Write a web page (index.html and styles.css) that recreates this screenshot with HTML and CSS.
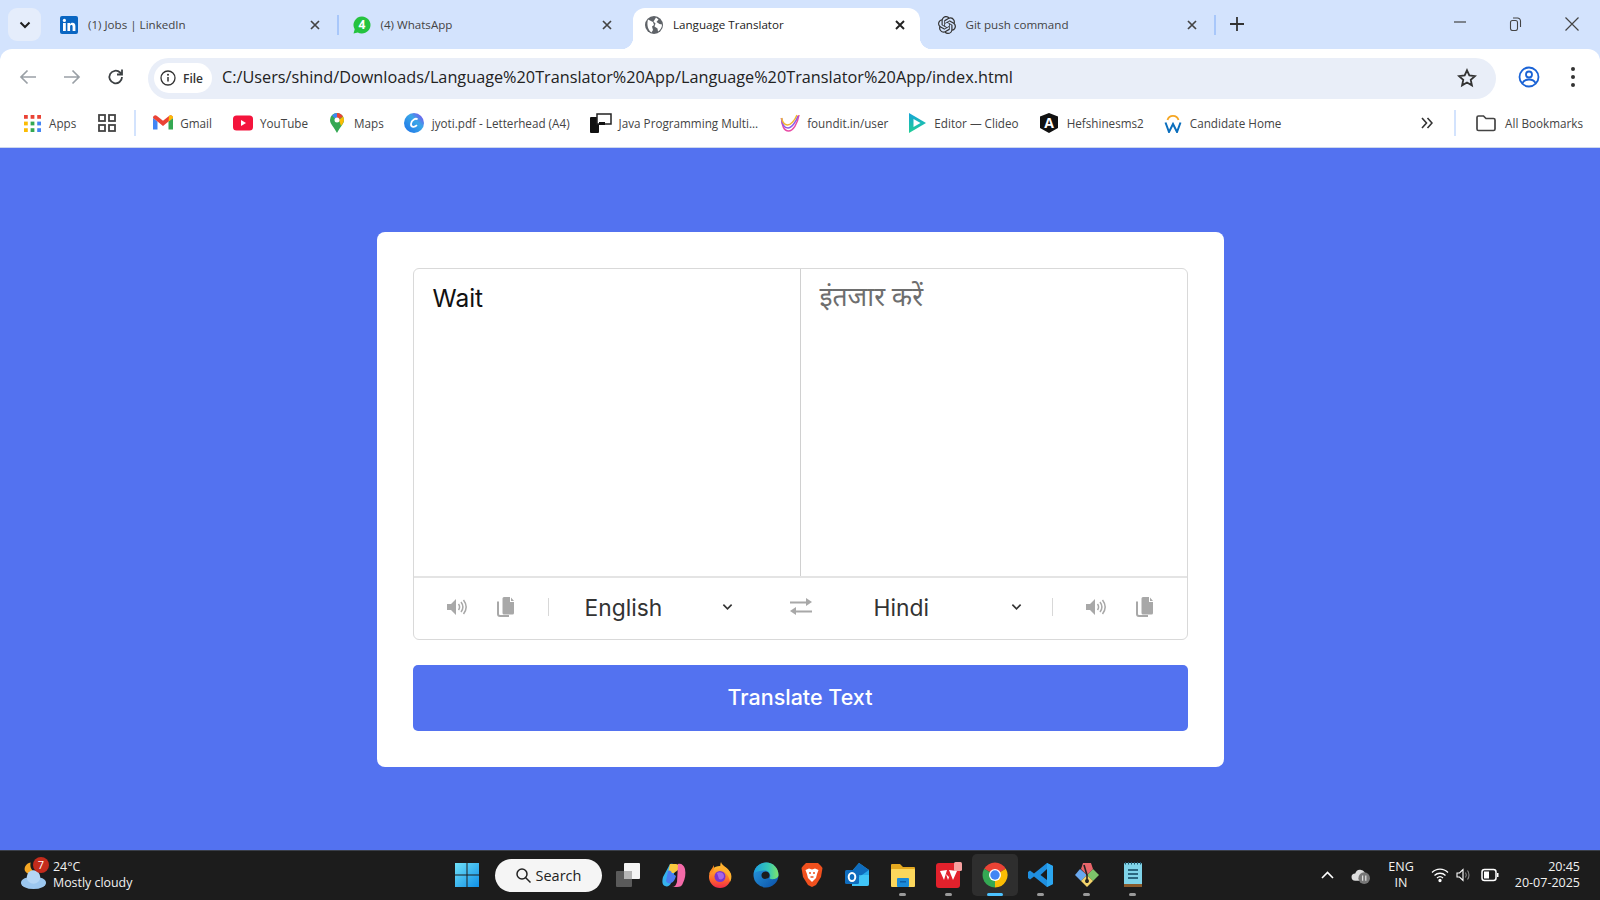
FILE: index.html
```html
<!DOCTYPE html>
<html lang="en">
<head>
<meta charset="utf-8">
<title>Language Translator</title>
<link rel="stylesheet" href="styles.css">
</head>
<body>
<div class="shell">
  <header class="tabstrip">
    <button class="tab-menu"><svg width="12" height="8" viewBox="0 0 12 8"><path d="M1.500 1.500 6 6l4.500-4.500" fill="none" stroke="#1f1f1f" stroke-width="2"/></svg></button>
    <div class="tab">
      <svg class="fav" viewBox="0 0 18 18"><rect width="18" height="18" rx="2" fill="#0a66c2"/><rect x="3" y="7" width="2.800" height="8" fill="#fff"/><circle cx="4.400" cy="4.400" r="1.600" fill="#fff"/><path d="M7.400 7h2.600v1.200c.6-.9 1.500-1.400 2.600-1.400 2 0 2.800 1.300 2.800 3.400V15h-2.800v-4.200c0-1-.3-1.700-1.200-1.700s-1.300.7-1.300 1.700V15H7.400z" fill="#fff"/></svg>
      <span class="tab-title">(1) Jobs | LinkedIn</span>
      <svg class="tab-x" viewBox="0 0 10 10"><path d="m1 1 8 8M9 1 1 9" stroke="#444" stroke-width="1.700"/></svg>
    </div>
    <i class="tab-sep"></i>
    <div class="tab">
      <svg class="fav" viewBox="0 0 18 18"><path d="M9 .5a8.500 8.500 0 0 0-7.300 12.800L.5 17.500l4.300-1.100A8.500 8.500 0 1 0 9 .5z" fill="#25c33f"/><text x="9" y="13" class="fav-num">4</text></svg>
      <span class="tab-title">(4) WhatsApp</span>
      <svg class="tab-x" viewBox="0 0 10 10"><path d="m1 1 8 8M9 1 1 9" stroke="#444" stroke-width="1.700"/></svg>
    </div>
    <i class="tab-sep clear"></i>
    <div class="tab active">
      <svg class="fav" viewBox="0 0 18 18"><circle cx="9" cy="9" r="9" fill="#5f6368"/><path d="M3 3.500 8 6l1 3-2 1.500 1 3.500-1.500 2.500C3 14 1.500 9 3 3.500zM11 1.500l2.500 2-2 2.500 3 2 2.500.5c0 3-1.500 5.500-4 7l-.5-3-3-2 1-3-2-2z" fill="#fff"/></svg>
      <span class="tab-title">Language Translator</span>
      <svg class="tab-x" viewBox="0 0 10 10"><path d="m1 1 8 8M9 1 1 9" stroke="#222" stroke-width="1.900"/></svg>
    </div>
    <i class="tab-sep clear"></i>
    <div class="tab">
      <svg class="fav" viewBox="0 0 24 24"><path fill="#333" d="M22.282 9.821a5.985 5.985 0 0 0-.516-4.91 6.046 6.046 0 0 0-6.51-2.9A6.065 6.065 0 0 0 4.981 4.18a5.985 5.985 0 0 0-3.998 2.9 6.046 6.046 0 0 0 .743 7.097 5.98 5.98 0 0 0 .51 4.911 6.051 6.051 0 0 0 6.515 2.9A5.985 5.985 0 0 0 13.26 24a6.056 6.056 0 0 0 5.772-4.206 5.99 5.99 0 0 0 3.997-2.9 6.056 6.056 0 0 0-.747-7.073zM13.26 22.43a4.476 4.476 0 0 1-2.876-1.04l.141-.081 4.779-2.758a.795.795 0 0 0 .392-.681v-6.737l2.02 1.168a.071.071 0 0 1 .038.052v5.583a4.504 4.504 0 0 1-4.494 4.494zM3.6 18.304a4.47 4.47 0 0 1-.535-3.014l.142.085 4.783 2.759a.771.771 0 0 0 .78 0l5.843-3.369v2.332a.08.08 0 0 1-.033.062L9.74 19.95a4.5 4.5 0 0 1-6.14-1.646zM2.34 7.896a4.485 4.485 0 0 1 2.366-1.973V11.6a.766.766 0 0 0 .388.676l5.815 3.355-2.02 1.168a.076.076 0 0 1-.071 0l-4.83-2.786A4.504 4.504 0 0 1 2.34 7.872zm16.597 3.855l-5.833-3.387L15.119 7.2a.076.076 0 0 1 .071 0l4.83 2.791a4.494 4.494 0 0 1-.676 8.105v-5.678a.79.79 0 0 0-.407-.667zm2.01-3.023l-.141-.085-4.774-2.782a.776.776 0 0 0-.785 0L9.409 9.23V6.897a.066.066 0 0 1 .028-.061l4.83-2.787a4.5 4.5 0 0 1 6.68 4.66zm-12.64 4.135l-2.02-1.164a.08.08 0 0 1-.038-.057V6.075a4.5 4.5 0 0 1 7.375-3.453l-.142.08L8.704 5.46a.795.795 0 0 0-.393.681zm1.097-2.365l2.602-1.5 2.607 1.5v2.999l-2.597 1.5-2.607-1.5Z"/></svg>
      <span class="tab-title">Git push command</span>
      <svg class="tab-x" viewBox="0 0 10 10"><path d="m1 1 8 8M9 1 1 9" stroke="#444" stroke-width="1.700"/></svg>
    </div>
    <i class="tab-sep"></i>
    <span class="tab-plus"><svg width="14" height="14" viewBox="0 0 14 14"><path d="M7 0v14M0 7h14" stroke="#333" stroke-width="1.800"/></svg></span>
    <div class="win-controls">
      <svg width="14" height="14" viewBox="0 0 14 14"><path d="M1 5h12" stroke="#444" stroke-width="1.200"/></svg>
      <svg width="14" height="14" viewBox="0 0 14 14" fill="none" stroke="#444" stroke-width="1.100"><rect x="2.500" y="3.500" width="7" height="10" rx="2"/><path d="M5 1h4.500a3 3 0 0 1 3 3v6"/></svg>
      <svg class="win-close" width="14" height="14" viewBox="0 0 14 14"><path d="M.5.500l13 13M13.500.500l-13 13" stroke="#444" stroke-width="1.200"/></svg>
    </div>
  </header>

  <nav class="toolbar">
    <svg class="nav-ico" viewBox="0 0 18 18"><path d="M17 9H2M8.500 2.500 2 9l6.500 6.500" fill="none" stroke="#9aa0a6" stroke-width="1.700"/></svg>
    <svg class="nav-ico" viewBox="0 0 18 18"><path d="M1 9h15M9.500 2.500 16 9l-6.500 6.500" fill="none" stroke="#9aa0a6" stroke-width="1.700"/></svg>
    <svg class="nav-ico" viewBox="0 0 18 18"><path d="M15 9a6.300 6.300 0 1 1-1.900-4.500L15 6.500M15 1.500v5h-5" fill="none" stroke="#3c4043" stroke-width="1.800"/></svg>
    <div class="omnibox">
      <span class="site-chip"><svg width="16" height="16" viewBox="0 0 16 16"><circle cx="8" cy="8" r="7" fill="none" stroke="#333" stroke-width="1.300"/><path d="M8 7v4.500" stroke="#333" stroke-width="1.500"/><circle cx="8" cy="4.800" r="1" fill="#333"/></svg>File</span>
      <span class="url">C:/Users/shind/Downloads/Language%20Translator%20App/Language%20Translator%20App/index.html</span>
      <svg class="star" width="20" height="20" viewBox="0 0 24 24"><path d="m12 2.800 2.800 6.200 6.700.7-5 4.500 1.400 6.600-5.900-3.400-5.900 3.400 1.400-6.600-5-4.500 6.700-.7z" fill="none" stroke="#333" stroke-width="2.200"/></svg>
    </div>
    <svg class="avatar" width="22" height="22" viewBox="0 0 22 22" fill="none" stroke="#1a63d6" stroke-width="1.800"><circle cx="11" cy="11" r="9.500"/><circle cx="11" cy="8.500" r="3"/><path d="M4.500 17c1.500-3 4-3.500 6.500-3.500s5 .5 6.500 3.500"/></svg>
    <span class="kebab"><i></i><i></i><i></i></span>
  </nav>

  <nav class="bookmarks">
    <div class="bm bm-apps">
      <svg class="bm-ico" viewBox="0 0 18 18"><rect width="4" height="4" fill="#ea4335"/><rect x="7" width="4" height="4" fill="#ea4335"/><rect x="14" width="4" height="4" fill="#ea4335"/><rect y="7" width="4" height="4" fill="#fbbc04"/><rect x="7" y="7" width="4" height="4" fill="#34a853"/><rect x="14" y="7" width="4" height="4" fill="#4285f4"/><rect y="14" width="4" height="4" fill="#fbbc04"/><rect x="7" y="14" width="4" height="4" fill="#34a853"/><rect x="14" y="14" width="4" height="4" fill="#4285f4"/></svg>
      Apps</div>
    <svg class="grid-ico" viewBox="0 0 18 18" fill="none" stroke="#444" stroke-width="1.800"><rect x="1" y="1" width="6" height="6"/><rect x="11" y="1" width="6" height="6"/><rect x="1" y="11" width="6" height="6"/><rect x="11" y="11" width="6" height="6"/></svg>
    <i class="bm-sep"></i>
    <div class="bm bm-gmail"><svg class="bm-ico" viewBox="0 0 20 16"><path d="M0 3v11.500h4.500V6.500z" fill="#4285f4"/><path d="M20 3v11.500h-4.500V6.500z" fill="#34a853"/><path d="M0 3c0-2.500 2.500-3.500 4-2l6 4.800L16 1c1.500-1.500 4-.5 4 2l-4.500 3.500L10 11 4.500 6.500z" fill="#ea4335"/><path d="M16 1c1.500-1.500 4-.5 4 2l-4.500 3.500z" fill="#fbbc04"/></svg>Gmail</div>
    <div class="bm bm-yt"><svg class="bm-ico" viewBox="0 0 20 16"><rect width="20" height="15" y=".5" rx="3.500" fill="#f4143c"/><path d="m8 5 5 3-5 3z" fill="#fff"/></svg>YouTube</div>
    <div class="bm bm-maps"><svg class="bm-ico" viewBox="0 0 14 20"><path d="M7 0a7 7 0 0 1 7 7c0 4-4 7-7 13C4 14 0 11 0 7a7 7 0 0 1 7-7z" fill="#34a853"/><path d="M2 2.500A7 7 0 0 1 7 0v4.500a2.500 2.500 0 0 0-2 1z" fill="#4285f4"/><path d="M7 0a7 7 0 0 1 6 3.500L9 6a2.500 2.500 0 0 0-2-1.500z" fill="#ea4335"/><path d="M13 3.500A7 7 0 0 1 14 7c0 2-1.500 4-3 6L9 7z" fill="#fbbc04"/><circle cx="7" cy="7" r="2.500" fill="#fff"/></svg>Maps</div>
    <div class="bm bm-jyoti"><svg class="bm-ico" viewBox="0 0 20 20"><defs><linearGradient id="canva" x1="0" y1="1" x2="1" y2="0"><stop offset="0" stop-color="#1c6fe8"/><stop offset=".6" stop-color="#3aa7e8"/><stop offset="1" stop-color="#8a3ff0"/></linearGradient></defs><circle cx="10" cy="10" r="10" fill="url(#canva)"/><path d="M13.500 6.500C12 4.800 7.500 6.500 7 11c-.3 3.500 3.500 3.500 6 1.200" fill="none" stroke="#fff" stroke-width="1.800"/></svg>jyoti.pdf - Letterhead (A4)</div>
    <div class="bm bm-java"><svg class="bm-ico bm-wide" viewBox="0 0 22 20"><rect y="4" width="9" height="16" rx="1" fill="#111"/><rect x="7" y="1" width="14" height="10" fill="#fff" stroke="#222" stroke-width="1.500"/><rect x="9" y="9" width="6" height="3" fill="#111"/></svg>Java Programming Multi...</div>
    <div class="bm bm-found"><svg class="bm-ico" viewBox="0 0 20 20" fill="none" stroke-width="1.500"><path d="M1.500 5c0 7 2.500 13 7 13s9-7 10.500-16" stroke="#e84ba5"/><path d="M1.500 5c.5 6 3 10 6.500 10s8-6 10-12" stroke="#8e5ce6"/><path d="M1.500 5c1 4 3 7 6 7s7-4 9.500-10" stroke="#f2b632"/></svg>foundit.in/user</div>
    <div class="bm bm-clideo"><svg class="bm-ico" viewBox="0 0 18 20"><defs><linearGradient id="clid" x1="0" y1="0" x2="0" y2="1"><stop offset="0" stop-color="#16a4d8"/><stop offset="1" stop-color="#20cf94"/></linearGradient></defs><path d="M1 0 18 10 1 20z" fill="url(#clid)"/><path d="M5.500 6 12.500 10l-7 4z" fill="#fff"/></svg>Editor — Clideo</div>
    <div class="bm bm-hef"><svg class="bm-ico" viewBox="0 0 20 20"><path d="M10 0 19 3.500V15l-9 5-9-5V3.500z" fill="#111"/><text x="10" y="15" class="fav-a">A</text></svg>Hefshinesms2</div>
    <div class="bm bm-cand"><svg class="bm-ico" viewBox="0 0 18 20" fill="none"><path d="M3.500 7a5.700 5.700 0 0 1 11 0" stroke="#f5a623" stroke-width="1.800"/><path d="M1.500 9.500 5 19l4-8 4 8 3.500-9.500" stroke="#0a6ebd" stroke-width="2"/></svg>Candidate Home</div>
    <span class="bm-more"><svg width="12" height="12" viewBox="0 0 12 12" fill="none" stroke="#333" stroke-width="1.600"><path d="m1 1 4.500 5L1 11M6.500 1 11 6l-4.500 5"/></svg></span>
    <i class="bm-sep bm-sep2"></i>
    <div class="bm bm-all"><svg class="bm-ico" viewBox="0 0 20 17"><path d="M1 3a1.500 1.500 0 0 1 1.500-1.500h5L10 4h7.500A1.500 1.500 0 0 1 19 5.500v9a1.500 1.500 0 0 1-1.500 1.500h-15A1.500 1.500 0 0 1 1 14.500z" fill="none" stroke="#444" stroke-width="1.700"/></svg>All Bookmarks</div>
  </nav>

  <main class="page">
    <section class="card">
      <div class="panel">
        <div class="texts">
          <div class="pane from">Wait</div>
          <div class="pane to">इंतजार करें</div>
        </div>
        <div class="controls">
          <svg class="snd s1" viewBox="0 0 20 16"><use href="#sound"/></svg>
          <svg class="cpy" viewBox="0 0 17 20"><use href="#copy"/></svg>
          <i class="ctl-sep c1"></i>
          <div class="lang l1"><span>English</span><svg class="chev" viewBox="0 0 12 8"><path d="M1.500 1.500 6 6l4.500-4.500" fill="none" stroke="#333" stroke-width="1.800"/></svg></div>
          <svg class="swap" viewBox="0 0 22 18"><path d="M0 3.500h16V0l6 4-6 4V5.500H0zM22 12.500H6V9l-6 4 6 4v-2.500h16z" fill="#a8a8a8"/></svg>
          <div class="lang l2"><span>Hindi</span><svg class="chev" viewBox="0 0 12 8"><path d="M1.500 1.500 6 6l4.500-4.500" fill="none" stroke="#333" stroke-width="1.800"/></svg></div>
          <i class="ctl-sep c2"></i>
          <svg class="snd s2" viewBox="0 0 20 16"><use href="#sound"/></svg>
          <svg class="cpy" viewBox="0 0 17 20"><use href="#copy"/></svg>
        </div>
      </div>
      <button class="translate">Translate Text</button>
    </section>
  </main>

  <footer class="taskbar">
    <div class="weather">
      <svg class="w-ico" viewBox="0 0 28 30"><path d="M11 2c-1 5 1 9 6 10-3 3-8 3-11 0C3 8 6 3 11 2z" fill="#f5a623"/><ellipse cx="14" cy="23" rx="13" ry="6.500" fill="#9cc7ef"/><circle cx="14" cy="17" r="7" fill="#b4d6f5"/></svg>
      <span class="w-badge">7</span>
      <div class="w-text"><span>24°C</span><span>Mostly cloudy</span></div>
    </div>
    <svg class="winlogo" viewBox="0 0 24 24"><defs><linearGradient id="wg" x1="0" y1="0" x2="1" y2="1"><stop offset="0" stop-color="#6fe0f8"/><stop offset="1" stop-color="#0f8fe6"/></linearGradient></defs><path d="M0 0h11.500v11.500H0zM12.500 0H24v11.500H12.500zM0 12.500h11.500V24H0zM12.500 12.500H24V24H12.500z" fill="url(#wg)"/></svg>
    <div class="search"><svg width="15" height="15" viewBox="0 0 15 15" fill="none" stroke="#222" stroke-width="1.500"><circle cx="6" cy="6" r="5"/><path d="m9.500 9.500 5 5"/></svg>Search</div>
    <div class="tb-app"><svg class="tb-ico" viewBox="0 0 26 26"><rect x="1" y="9" width="16" height="16" rx="1" fill="#5a5a5a"/><rect x="9" y="1" width="16" height="16" rx="1" fill="#f4f4f4"/><rect x="9" y="9" width="8" height="8" fill="#b5b5b5"/></svg></div>
    <div class="tb-app"><svg class="tb-ico" viewBox="0 0 26 26"><path d="M9 2c3-1 5 0 6 3l-5 16c-1 3-4 4-6 3-3-1-3-5-2-9z" fill="#35b2ee"/><path d="M9 2h6c3 0 3 3 2 6l-4 3H7z" fill="#f8c93e"/><path d="M17 2c3-1 6 1 7 5 1 5 0 10-2 14-1 3-3 4-6 4h-5c3 0 4-2 5-5z" fill="#f46aa8"/><path d="M7 9c2-1 3 0 4 2l4 3c-1 3-2 6-5 7-2 1-4 0-5-2z" fill="#4a7cf0"/></svg></div>
    <div class="tb-app"><svg class="tb-ico" viewBox="0 0 26 26"><defs><linearGradient id="ffx" x1="0" y1="0" x2="0" y2="1"><stop offset="0" stop-color="#ffc02e"/><stop offset=".6" stop-color="#ff6a2b"/><stop offset="1" stop-color="#f0284a"/></linearGradient></defs><circle cx="13" cy="15" r="11" fill="url(#ffx)"/><path d="M14 0c1 4 8 6 10 12 1 3 0 6-1 8-1-7-5-10-9-13-1-2-1-5 0-7z" fill="#ffb02e"/><path d="M7 3c-1 3-4 5-5 9l4-2c1-2 1-5 1-7z" fill="#ff8a1f"/><circle cx="13" cy="14.500" r="5.500" fill="#7a35d0"/><path d="M10 11c3-2 7 0 7 3s-3 4-5 3" fill="#a565e8"/></svg></div>
    <div class="tb-app"><svg class="tb-ico" viewBox="0 0 26 26"><defs><linearGradient id="edg" x1="0" y1="0" x2="1" y2="1"><stop offset="0" stop-color="#2a9ee0"/><stop offset="1" stop-color="#0a4fa8"/></linearGradient><linearGradient id="edg2" x1="0" y1="0" x2="1" y2="0"><stop offset="0" stop-color="#1b9de2"/><stop offset=".6" stop-color="#36c9b3"/><stop offset="1" stop-color="#7fe36a"/></linearGradient></defs><circle cx="13" cy="13" r="12.500" fill="url(#edg)"/><path d="M1 11C2 5 7 .5 13.500.5 20 .5 25.500 6 25.500 13c0 4-6 5-9 3.500 2-3 0-8-5-8-4 0-8 1-10.500 2.500z" fill="url(#edg2)"/><path d="M10.500 10c3-1.500 6 .5 6 3 0 1.500-.5 2-1 3l-3.500 1c-2.500 0-3.500-2-3.500-3.500s.5-2.500 2-3.500z" fill="#1c1c1c"/></svg></div>
    <div class="tb-app"><svg class="tb-ico brave" viewBox="0 0 22 26"><path d="M5 1h12l3 3 1.500 2-1.500 9-5 8-4 2-4-2-5-8L.5 6 2 4z" fill="#f0501e"/><path d="M4.500 8 8 6.500l3 1 3-1L17.500 8 16 12l-1 4-4 4-4-4-1-4z" fill="#fff"/><path d="M8 11h2M12 11h2M9.500 15h3" stroke="#f0501e" stroke-width="1.300"/></svg></div>
    <div class="tb-app"><svg class="tb-ico" viewBox="0 0 26 26"><path d="M15 1 25 8v14a2 2 0 0 1-2 2H8V9z" fill="#28a8ea"/><path d="M8 9 15 1l10 7-10 7z" fill="#0f6cbd"/><path d="M8 13 25 13v9a2 2 0 0 1-2 2H8z" fill="#50d9ff" opacity=".6"/><rect x="1" y="8" width="14" height="14" rx="1.500" fill="#0f6cbd"/><ellipse cx="8" cy="15" rx="3.300" ry="4" fill="none" stroke="#fff" stroke-width="2"/></svg></div>
    <div class="tb-app dot"><svg class="tb-ico" viewBox="0 0 26 26"><path d="M1 3a1 1 0 0 1 1-1h8l3 3h11a1 1 0 0 1 1 1v18H1z" fill="#e5a920"/><rect x="1" y="7" width="24" height="18" rx="1" fill="#fcd75c"/><rect x="7" y="16" width="12" height="9" rx="1" fill="#1a8ad8"/><rect x="10" y="19" width="6" height="1.500" fill="#0d5fa8"/></svg></div>
    <div class="tb-app dot"><svg class="tb-ico" viewBox="0 0 26 26"><rect y="1" width="24" height="25" rx="3" fill="#e2212c"/><rect x="18" width="8" height="9" rx="1.500" fill="#f7a0a0"/><path d="m4 9 7-1-3 10zM10 12l3 3 2-5-3 8zM13 8l8 1-4 9z" fill="#fff"/></svg></div>
    <div class="tb-app current"><svg class="tb-ico" viewBox="0 0 26 26"><path d="M13 13 2.180 6.750A12.500 12.500 0 0 1 23.830 6.750z" fill="#ea4335"/><path d="M13 13 23.830 6.750A12.500 12.500 0 0 1 13 25.500z" fill="#fbbc04"/><path d="M13 13 13 25.500A12.500 12.500 0 0 1 2.180 6.750z" fill="#34a853"/><circle cx="13" cy="13" r="6" fill="#fff"/><circle cx="13" cy="13" r="4.700" fill="#4285f4"/></svg></div>
    <div class="tb-app dot"><svg class="tb-ico" viewBox="0 0 26 26"><path d="M19 1 25 4v18l-6 3L6 14.500l-4 3-2-1.500V10l2-1.500 4 3z" fill="#1f8fe0"/><path d="M19 1 25 4v18l-6 3z" fill="#2ba6f0"/><path d="m19 7-6.500 6 6.500 5z" fill="#1c1c1c"/></svg></div>
    <div class="tb-app dot"><svg class="tb-ico" viewBox="0 0 26 26"><path d="M6 7 13 13l-6 6-6-6z" fill="#6aa8ee"/><path d="M13 13 19 7l6 6-6 6z" fill="#7cc46a"/><path d="M7 19l6-6 6 6-6 6z" fill="#f3d46b"/><path d="M9 1l8 0 2 6-6 6-6-6z" fill="#e8656a"/><path d="m10 3 3 10v8" stroke="#222" stroke-width="1.600" fill="none"/><circle cx="13" cy="19" r="2" fill="#222"/></svg></div>
    <div class="tb-app dot"><svg class="tb-ico" viewBox="0 0 20 26"><rect x="1" y="1" width="18" height="24" rx="1" fill="#7fd3e8"/><rect x="1" y="22" width="18" height="3" fill="#8a5a2b"/><path d="M2.500 0v2.500M5.500 0v2.500M8.500 0v2.500M11.500 0v2.500M14.500 0v2.500M17.500 0v2.500" stroke="#20546a" stroke-width="1"/><path d="M5 8h10M5 12h10M5 16h10" stroke="#10445c" stroke-width="1.500"/></svg></div>
    <div class="tray">
      <svg width="13" height="8" viewBox="0 0 13 8"><path d="m1 7 5.500-5.500L12 7" fill="none" stroke="#fff" stroke-width="1.600"/></svg>
      <svg class="tray-cloud" width="19" height="17" viewBox="0 0 18 16"><path d="M4 13a3.500 3.500 0 0 1 0-7 5 5 0 0 1 9-1v8z" fill="#ddd"/><circle cx="12.500" cy="10.500" r="5.500" fill="#777"/><path d="M11 8v5M14 8v5" stroke="#ddd" stroke-width="1.200"/></svg>
      <div class="lang-ind"><span>ENG</span><span>IN</span></div>
      <svg class="tray-wifi" width="18" height="16" viewBox="0 0 18 16" fill="none" stroke="#fff" stroke-width="1.300"><path d="M1 5.500c4.500-4.500 11.500-4.500 16 0M3.500 8.500c3-3 8-3 11 0M6 11c1.700-1.500 4.300-1.500 6 0"/><circle cx="9" cy="13.500" r="1" fill="#fff"/></svg>
      <svg class="tray-vol" width="16" height="16" viewBox="0 0 16 16" fill="none" stroke="#fff" stroke-width="1.100"><path d="M1 6h2.500L7 2.500v11L3.500 10H1z"/><path d="M9.500 5.500c1 1.500 1 3.500 0 5M11.500 3.500c2 2.500 2 6.500 0 9" stroke="#888"/></svg>
      <svg class="tray-bat" width="18" height="14" viewBox="0 0 18 14"><rect x="1" y="1.500" width="14" height="11" rx="2.500" fill="none" stroke="#fff" stroke-width="1.500"/><rect x="3" y="3.500" width="5" height="7" fill="#fff"/><rect x="16" y="5" width="1.500" height="4" fill="#fff"/></svg>
      <div class="clock"><span>20:45</span><span>20-07-2025</span></div>
    </div>
  </footer>
</div>
<svg class="defs" width="0" height="0">
  <defs>
    <g id="sound"><path d="M0 5h4l5-5v16l-5-5H0z" fill="#a8a8a8"/><path d="M11.500 5c1.300 1.800 1.300 4.200 0 6M14 3c2.300 3 2.300 7 0 10M16.500 1c3.300 4.300 3.300 9.700 0 14" fill="none" stroke="#a8a8a8" stroke-width="1.500"/></g>
    <g id="copy"><path d="M7 0h6v5h4v11a1.500 1.500 0 0 1-1.500 1.500H7A1.500 1.500 0 0 1 5.500 16V1.500A1.500 1.500 0 0 1 7 0zM14 .5 17 4h-3z" fill="#a8a8a8"/><path d="M1 4.500V17a2 2 0 0 0 2 2h9" fill="none" stroke="#a8a8a8" stroke-width="2"/></g>
  </defs>
</svg>
</body>
</html>
```

FILE: styles.css
```css
* { box-sizing: border-box; }
html, body { margin: 0; height: 100%; }
body { font-family: "Open Sans", "Liberation Sans", sans-serif; overflow: hidden; }
i { display: block; }
.defs { position: absolute; }
.shell { height: 900px; display: flex; flex-direction: column; background: #d3e3fd; }

/* tab strip */
.tabstrip { height: 49px; display: flex; align-items: flex-end; padding-left: 8px; flex: none; }
.tab-menu { width: 33px; height: 33px; margin: 0 7px 8px 0; border: 0; border-radius: 9px; background: #e5edfb; display: flex; align-items: center; justify-content: center; padding: 0; flex: none; }
.tab { width: 286.500px; height: 41px; display: flex; align-items: center; padding: 0 15px 8px 12px; border-radius: 12px 12px 0 0; color: #444; font-size: 11.600px; position: relative; flex: none; }
.tab.active { background: #fff; color: #222; }
.tab.active::before, .tab.active::after { content: ""; position: absolute; bottom: 0; width: 12px; height: 12px; }
.tab.active::before { left: -12px; background: radial-gradient(circle at 0 0, transparent 12px, #fff 12.500px); }
.tab.active::after { right: -12px; background: radial-gradient(circle at 100% 0, transparent 12px, #fff 12.500px); }
.fav { width: 18px; height: 18px; margin-right: 10px; flex: none; }
.fav-num { font: 700 12px "Open Sans", sans-serif; fill: #fff; text-anchor: middle; }
.fav-a { font: 700 14px "Open Sans", sans-serif; fill: #fff; text-anchor: middle; }
.tab-title { flex: 1; white-space: nowrap; }
.tab-x { width: 10px; height: 10px; flex: none; }
.tab-sep { width: 2px; height: 20px; background: #a8c7fa; margin: 0 2px 14px; flex: none; }
.tab-sep.clear { background: none; margin: 0 2px; height: 0; }
.tab-plus { margin: 0 0 18px 12px; height: 14px; line-height: 0; flex: none; }
.win-controls { margin-left: auto; display: flex; gap: 41px; padding-right: 21px; margin-bottom: 18px; }
.win-close { margin-left: 2px; }

/* toolbar */
.toolbar { height: 50px; background: #fff; display: flex; align-items: center; padding-left: 19px; flex: none; border-radius: 12px 12px 0 0; }
.nav-ico { width: 18px; height: 18px; margin: 6px 26px 0 0; flex: none; }
.nav-ico:nth-child(3) { margin-right: 23px; }
.omnibox { width: 1348px; height: 41px; border-radius: 21px; background: #e9eef8; display: flex; align-items: center; padding: 0 19px 0 6px; margin-top: 8px; flex: none; }
.site-chip { width: 58px; height: 30px; border-radius: 15px; background: #fff; display: flex; align-items: center; gap: 7px; padding-left: 6px; font-size: 12px; font-weight: 600; color: #333; flex: none; }
.url { font-size: 16.250px; line-height: 1; color: #222; margin: 0 0 1px 10px; flex: 1; white-space: nowrap; }
.star { flex: none; margin-bottom: 1px; }
.avatar { margin: 6px 0 0 22px; flex: none; }
.kebab { margin: 6px 0 0 31px; display: flex; flex-direction: column; gap: 4px; }
.kebab i { width: 4px; height: 4px; border-radius: 50%; background: #333; }

/* bookmarks */
.bookmarks { height: 49px; background: #fff; display: flex; align-items: center; padding-left: 24px; font-size: 11.700px; color: #444; flex: none; border-bottom: 1px solid #cdd8ee; }
.bm { display: flex; align-items: center; gap: 8px; white-space: nowrap; }
.bm-ico { width: 20px; height: 20px; flex: none; }
.bm-apps .bm-ico { width: 17px; height: 17px; }
.bm-wide { width: 22px; }
.grid-ico { width: 18px; height: 18px; margin-left: 22px; flex: none; }
.bm-sep { width: 2px; height: 26px; background: #d3e3fd; margin: 0 17px 0 18px; flex: none; }
.bm-gmail { margin-right: 21px; gap: 7px; }
.bm-yt { margin-right: 19px; gap: 7px; }
.bm-maps { margin-right: 20px; gap: 7px; }
.bm-jyoti { margin-right: 20px; }
.bm-java { margin-right: 22px; gap: 7px; }
.bm-found { margin-right: 19px; gap: 7px; }
.bm-clideo { margin-right: 20px; gap: 7px; }
.bm-hef { margin-right: 19px; }
.bm-cand { gap: 7px; }
.bm-more { margin-left: auto; line-height: 0; }
.bm-sep2 { margin: 0 20px 0 21px; }
.bm-all { padding-right: 17px; gap: 9px; }

/* page */
.page { flex: 1; background: #5372f0; display: flex; align-items: center; justify-content: center; padding-top: 1px; }
.card { width: 847px; height: 535px; background: #fff; border-radius: 8px; padding: 36px; display: flex; flex-direction: column; gap: 25px; }
.panel { height: 372px; border: 1px solid #d9d9d9; border-radius: 6px; display: flex; flex-direction: column; flex: none; }
.texts { height: 309px; display: flex; border-bottom: 2px solid #e4e4e4; flex: none; }
.pane { flex: 1; padding: 14px 19px; font-size: 24.500px; line-height: 30px; }
.from { color: #111; font-family: "Inter", sans-serif; }
.to { color: #6e6e6e; border-left: 1px solid #d0d0d0; font-family: "Noto Sans", sans-serif; font-size: 26.500px; padding-top: 12px; }
.controls { flex: 1; display: flex; align-items: center; padding-bottom: 3px; }
.snd { width: 20px; height: 16px; flex: none; }
.s1 { margin-left: 33px; }
.s2 { margin-left: 33px; }
.cpy { width: 17px; height: 20px; margin-left: 30px; flex: none; }
.ctl-sep { width: 1px; height: 18px; background: #d8d8d8; flex: none; }
.c1 { margin-left: 34px; }
.c2 { margin-left: 30px; }
.lang { width: 148px; display: flex; align-items: center; justify-content: space-between; font-size: 22.800px; color: #333; font-family: "Inter", sans-serif; flex: none; }
.l1 { margin-left: 36px; }
.l2 { margin-left: 62px; }
.chev { width: 11px; height: 8px; margin-right: 0; }
.swap { width: 22px; height: 18px; margin-left: 57px; flex: none; }
.translate { height: 66px; border: 0; border-radius: 5px; background: #5372f0; color: #fff; font: 500 21.500px "Inter", sans-serif; flex: none; padding: 0 0 2px; }

/* taskbar */
.taskbar { height: 50px; background: #1c1c1c; border-top: 1px solid #3a3f4a; display: flex; align-items: center; color: #f2f2f2; flex: none; padding-bottom: 1px; }
.weather { position: relative; display: flex; align-items: center; padding-left: 20px; width: 455px; flex: none; }
.w-ico { width: 27px; height: 30px; flex: none; }
.w-badge { position: absolute; left: 33px; top: -2px; width: 16px; height: 16px; border-radius: 50%; background: #c42b1c; font-size: 11px; line-height: 16px; text-align: center; color: #fff; }
.w-text { display: flex; flex-direction: column; margin-left: 6px; font-size: 12.400px; line-height: 16.500px; white-space: nowrap; }
.winlogo { width: 24px; height: 24px; flex: none; }
.search { width: 107px; height: 33px; margin: 0 3px 0 16px; border-radius: 17px; background: #f5f5f5; color: #222; display: flex; align-items: center; justify-content: center; gap: 5px; font-size: 14.500px; flex: none; }
.tb-app { width: 45.900px; height: 42px; display: flex; align-items: center; justify-content: center; border-radius: 5px; position: relative; flex: none; }
.tb-ico { width: 26px; height: 26px; flex: none; }
.tb-ico.brave { width: 22px; }
.tb-app.current { background: #2e2e2e; }
.dot::after, .current::after { content: ""; position: absolute; bottom: 0; left: 19px; width: 7px; height: 3px; border-radius: 2px; background: #9a9a9a; }
.current::after { left: 15px; width: 16px; background: #4cc2ff; }
.tray { margin-left: auto; display: flex; align-items: center; padding-right: 20px; font-size: 12.500px; flex: none; }
.tray-cloud { margin-left: 17px; }
.lang-ind { display: flex; flex-direction: column; align-items: center; line-height: 16.500px; margin-left: 18px; }
.tray-wifi { margin-left: 17px; }
.tray-vol { margin-left: 7px; }
.tray-bat { margin-left: 9px; }
.clock { display: flex; flex-direction: column; align-items: flex-end; line-height: 16.500px; margin-left: 16px; white-space: nowrap; }
```
